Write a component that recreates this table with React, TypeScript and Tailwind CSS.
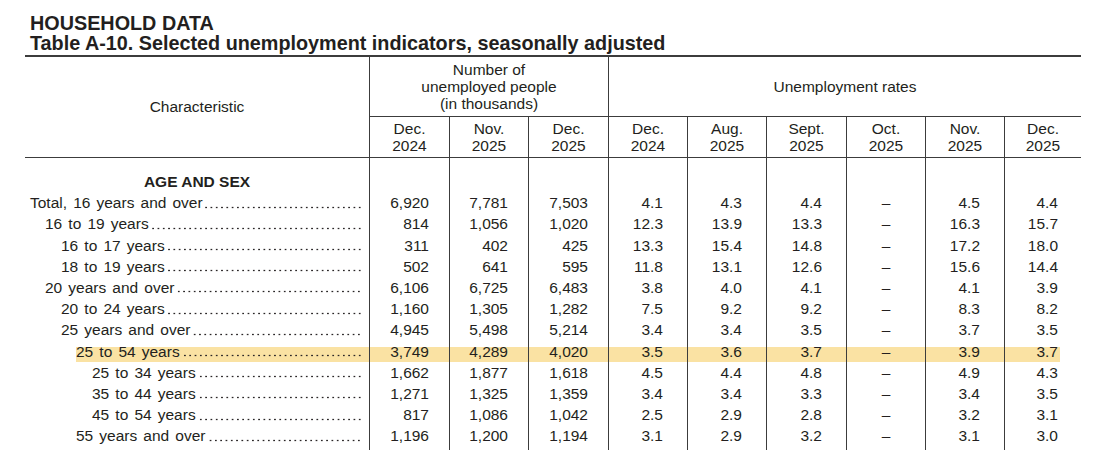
import React from "react";

type Row = { label: string; level: number; vals: string[]; hl?: boolean };

const rows: Row[] = [
  { label: "Total, 16 years and over", level: 0, vals: ["6,920", "7,781", "7,503", "4.1", "4.3", "4.4", "–", "4.5", "4.4"] },
  { label: "16 to 19 years", level: 1, vals: ["814", "1,056", "1,020", "12.3", "13.9", "13.3", "–", "16.3", "15.7"] },
  { label: "16 to 17 years", level: 2, vals: ["311", "402", "425", "13.3", "15.4", "14.8", "–", "17.2", "18.0"] },
  { label: "18 to 19 years", level: 2, vals: ["502", "641", "595", "11.8", "13.1", "12.6", "–", "15.6", "14.4"] },
  { label: "20 years and over", level: 1, vals: ["6,106", "6,725", "6,483", "3.8", "4.0", "4.1", "–", "4.1", "3.9"] },
  { label: "20 to 24 years", level: 2, vals: ["1,160", "1,305", "1,282", "7.5", "9.2", "9.2", "–", "8.3", "8.2"] },
  { label: "25 years and over", level: 2, vals: ["4,945", "5,498", "5,214", "3.4", "3.4", "3.5", "–", "3.7", "3.5"] },
  { label: "25 to 54 years", level: 3, vals: ["3,749", "4,289", "4,020", "3.5", "3.6", "3.7", "–", "3.9", "3.7"], hl: true },
  { label: "25 to 34 years", level: 4, vals: ["1,662", "1,877", "1,618", "4.5", "4.4", "4.8", "–", "4.9", "4.3"] },
  { label: "35 to 44 years", level: 4, vals: ["1,271", "1,325", "1,359", "3.4", "3.4", "3.3", "–", "3.4", "3.5"] },
  { label: "45 to 54 years", level: 4, vals: ["817", "1,086", "1,042", "2.5", "2.9", "2.8", "–", "3.2", "3.1"] },
  { label: "55 years and over", level: 3, vals: ["1,196", "1,200", "1,194", "3.1", "2.9", "3.2", "–", "3.1", "3.0"] },
];

const indents = ["pl-[5px]", "pl-[20px]", "pl-[36px]", "pl-[51px]", "pl-[67px]"];

const GRID =
  "grid grid-cols-[344px_80px_79px_80px_79px_79px_80px_79px_79px_77px]";
const HL =
  "bg-[linear-gradient(to_bottom,transparent_6px,#fae2a3_6px,#fae2a3_21px,transparent_21px)]";
const LINE = "border-l border-[#3c3c3c]";
const LEADER =
  "bg-[radial-gradient(circle,#2a2627_0.75px,transparent_1.15px)] bg-[length:5.3px_3px] bg-repeat-x bg-[position:right_1px_top_13.5px]";

const months = [
  ["Dec.", "2024"],
  ["Nov.", "2025"],
  ["Dec.", "2025"],
  ["Dec.", "2024"],
  ["Aug.", "2025"],
  ["Sept.", "2025"],
  ["Oct.", "2025"],
  ["Nov.", "2025"],
  ["Dec.", "2025"],
];

function DataRow({ r }: { r: Row }) {
  return (
    <div className={`${GRID} h-[21.2px] leading-[21.2px]`}>
      <div className={`${indents[r.level]} flex min-w-0`}>
        <div className={`flex min-w-0 flex-1 pr-[6px] ${r.hl ? HL : ""}`}>
          <span className="whitespace-nowrap [word-spacing:1.8px] pr-[2px]">{r.label}</span>
          <span className={`min-w-0 flex-1 ${LEADER}`} />
        </div>
      </div>
      {r.vals.map((v, i) => {
        const isDash = v === "–";
        const pad = i < 3 ? "pr-[20px]" : "pr-[24px]";
        if (i === 8) {
          return (
            <div key={i} className={`${LINE} pr-[21px]`}>
              <div className={`text-right pr-[2px] ${r.hl ? HL : ""}`}>{v}</div>
            </div>
          );
        }
        return (
          <div key={i} className={LINE}>
            <div className={`${isDash ? "text-center" : `text-right ${pad}`} ${r.hl ? HL : ""}`}>{v}</div>
          </div>
        );
      })}
    </div>
  );
}

function EmptyRow({ h, children }: { h: string; children?: React.ReactNode }) {
  return (
    <div className={`${GRID} ${h}`}>
      <div>{children}</div>
      {Array.from({ length: 9 }).map((_, i) => (
        <div key={i} className={LINE} />
      ))}
    </div>
  );
}

export default function App() {
  return (
    <div className="w-[1099px] h-[450px] overflow-hidden bg-white font-['Liberation_Sans',Arial,sans-serif] text-[#231f20]">
      <div className="pl-[30px] pt-[13px] pb-[2px] text-[19.8px] font-bold leading-[20px]">
        <div>HOUSEHOLD DATA</div>
        <div>Table A-10. Selected unemployment indicators, seasonally adjusted</div>
      </div>
      <div className="ml-[25px] w-[1056px] text-[15.5px]">
        <div className={`${GRID} grid-rows-[60px_40px] border-t-2 border-b border-[#3c3c3c]`}>
          <div className="row-span-2 flex items-center justify-center">Characteristic</div>
          <div className={`col-span-3 ${LINE} border-b flex items-center justify-center text-center leading-[17px] pb-[1px]`}>
            <div>
              Number of
              <br />
              unemployed people
              <br />
              (in thousands)
            </div>
          </div>
          <div className={`col-span-6 ${LINE} border-b flex items-center justify-center`}>Unemployment rates</div>
          {months.map(([m, y], i) => (
            <div key={i} className={`${LINE} flex flex-col items-center justify-center leading-[17.5px]`}>
              <div>{m}</div>
              <div>{y}</div>
            </div>
          ))}
        </div>
        <EmptyRow h="h-[13px]" />
        <EmptyRow h="h-[21.2px]">
          <div className="text-center font-bold leading-[21.2px]">AGE AND SEX</div>
        </EmptyRow>
        {rows.map((r, i) => (
          <DataRow key={i} r={r} />
        ))}
        <EmptyRow h="h-[10px]" />
      </div>
    </div>
  );
}
